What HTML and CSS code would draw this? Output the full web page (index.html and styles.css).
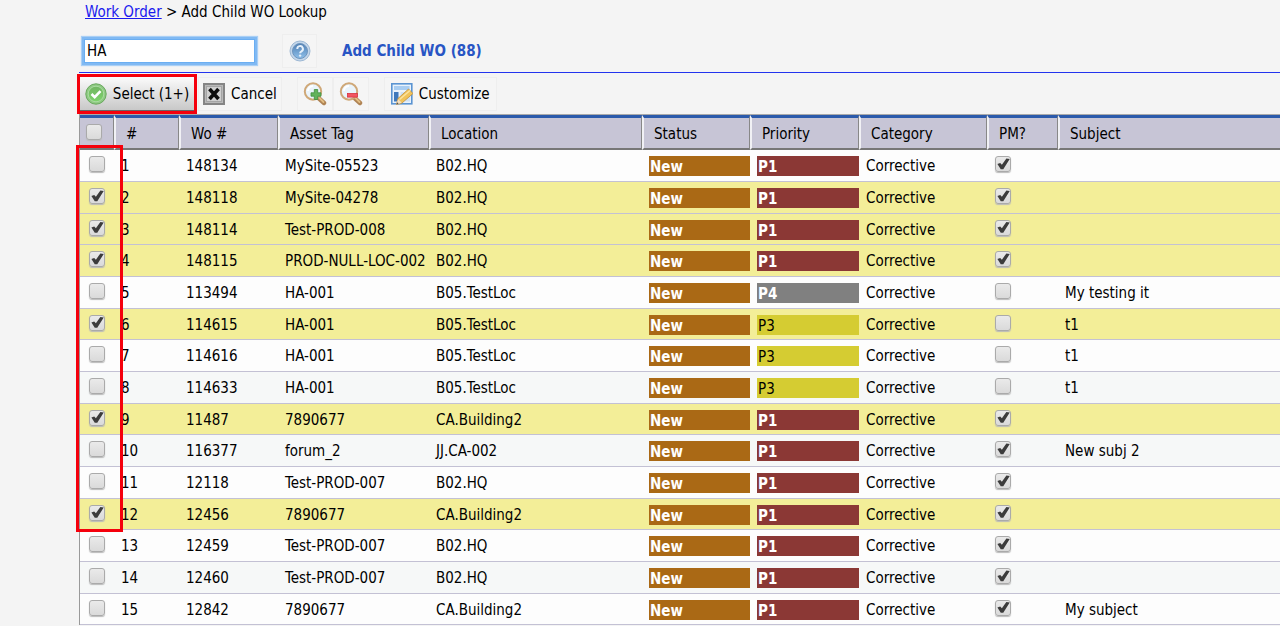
FILE: index.html
```html
<!DOCTYPE html>
<html lang="en">
<head>
    <meta charset="UTF-8">
    <meta name="viewport" content="width=device-width, initial-scale=1.0">
    <title>Add Child WO Lookup</title>
    <link rel="stylesheet" href="styles.css">
</head>
<body>
    <nav class="breadcrumb"><a href="#">Work Order</a> &gt; Add Child WO Lookup</nav>

    <div class="search-bar">
        <input type="text" class="search-input" value="HA" aria-label="Search">
        <button class="tool-btn help-btn" title="Help">
            <svg width="22" height="22" viewBox="0 0 22 22">
                <defs>
                    <linearGradient id="helpFill" x1="0" y1="0" x2="0" y2="1">
                        <stop offset="0" stop-color="#4f7fb3"></stop>
                        <stop offset="1" stop-color="#8fc0ea"></stop>
                    </linearGradient>
                </defs>
                <circle cx="11" cy="11" r="10" fill="#c3d6ea" stroke="#9db8d4"></circle>
                <circle cx="11" cy="11" r="7.5" fill="url(#helpFill)" stroke="#6f95be"></circle>
                <path d="M8.3 9a2.8 2.8 0 1 1 4.2 2.3c-1 .6-1.4 1-1.4 2" fill="none" stroke="#e6f0fa" stroke-width="2"></path>
                <circle cx="11.1" cy="15.6" r="1.2" fill="#e6f0fa"></circle>
            </svg>
        </button>
        <h1 class="title">Add Child WO (88)</h1>
    </div>

    <div class="toolbar">
        <button class="tool-btn select-btn">
            <svg width="22" height="22" viewBox="0 0 22 22">
                <defs>
                    <linearGradient id="okFill" x1="0" y1="0" x2="0" y2="1">
                        <stop offset="0" stop-color="#72b562"></stop>
                        <stop offset="1" stop-color="#7ed36c"></stop>
                    </linearGradient>
                </defs>
                <circle cx="11" cy="11" r="10.2" fill="#8fc983" stroke="#68a85c"></circle>
                <circle cx="11" cy="11" r="7.8" fill="url(#okFill)" stroke="#a9dca0"></circle>
                <path d="M6.5 11l3.2 3.2 5.8-6" fill="none" stroke="#fff" stroke-width="2.6"></path>
            </svg>
            Select (1+)
        </button>
        <button class="tool-btn cancel-btn">
            <svg width="22" height="22" viewBox="0 0 22 22">
                <rect x="1" y="1" width="20" height="20" fill="#b9b9b9" stroke="#858585" stroke-width="2"></rect>
                <rect x="3.5" y="3.5" width="15" height="15" fill="#cfcfcf" stroke="#a5a5a5"></rect>
                <path d="M6.5 6l9 10M15.5 6l-9 10" stroke="#0d0d0d" stroke-width="3.6"></path>
            </svg>
            Cancel
        </button>
        <div class="zoom-group">
            <button class="tool-btn" title="Zoom in">
                <svg width="24" height="24" viewBox="0 0 24 24">
                    <path d="M15.5 16l5.5 5" stroke="#b08455" stroke-width="4.4" stroke-linecap="round"></path>
                    <path d="M16.5 16l4 4" stroke="#e3bf85" stroke-width="1.8" stroke-linecap="round"></path>
                    <circle cx="10" cy="9.5" r="8.2" fill="#eaf4fb" stroke="#cfa878" stroke-width="2"></circle>
                    <path d="M5 9a5 5 0 0 1 5-5" fill="none" stroke="#fff" stroke-width="2"></path>
                    <path d="M11.3 7.5h3.4v3.3H18v3.4h-3.3v3.3h-3.4v-3.3H8v-3.4h3.3z" fill="#62b35b" stroke="#3f8e3d" stroke-width=".8"></path>
                </svg>
            </button>
            <button class="tool-btn" title="Zoom out">
                <svg width="24" height="24" viewBox="0 0 24 24">
                    <path d="M15.5 16l5.5 5" stroke="#b08455" stroke-width="4.4" stroke-linecap="round"></path>
                    <path d="M16.5 16l4 4" stroke="#e3bf85" stroke-width="1.8" stroke-linecap="round"></path>
                    <circle cx="10" cy="9.5" r="8.2" fill="#eaf4fb" stroke="#cfa878" stroke-width="2"></circle>
                    <path d="M5 9a5 5 0 0 1 5-5" fill="none" stroke="#fff" stroke-width="2"></path>
                    <rect x="8.5" y="11.5" width="10" height="3.6" fill="#f25560" stroke="#d8323e" stroke-width=".8"></rect>
                </svg>
            </button>
        </div>
        <button class="tool-btn customize-btn">
            <svg width="22" height="22" viewBox="0 0 22 22">
                <rect x=".8" y=".8" width="20" height="20" fill="#e9f2fb" stroke="#5b94d2" stroke-width="1.6"></rect>
                <rect x="3" y="3" width="15.6" height="4" fill="#a9cdf1"></rect>
                <rect x="3" y="9" width="4.5" height="9.5" fill="#3f78bb"></rect>
                <path d="M9.5 9H19v9.5H9.5z" fill="#cfe1f4"></path>
                <path d="M5.5 21.5l1.5-6L17.500 6l4.500 4.500-11 9.500z" fill="#f1c35a" stroke="#c4903c" stroke-width=".8"></path>
                <path d="M8.5 16.5L19 7.500" stroke="#fbe3a0" stroke-width="1.6"></path>
                <path d="M5.5 21.5L7 16l3.8 3.8z" fill="#f3dfc2"></path>
                <path d="M5.5 21.5l.6-2.2 1.5 1.5z" fill="#555"></path>
            </svg>
            Customize
        </button>
    </div>

    <div class="grid-wrap">
        <table class="grid">
            <colgroup>
                <col class="col-check">
                <col class="col-num">
                <col class="col-wo">
                <col class="col-asset">
                <col class="col-location">
                <col class="col-status">
                <col class="col-priority">
                <col class="col-category">
                <col class="col-pm">
                <col>
            </colgroup>
            <thead>
                <tr>
                    <th class="check"><input type="checkbox" aria-label="Select all"></th>
                    <th>#</th>
                    <th>Wo #</th>
                    <th>Asset Tag</th>
                    <th>Location</th>
                    <th>Status</th>
                    <th>Priority</th>
                    <th>Category</th>
                    <th>PM?</th>
                    <th>Subject</th>
                </tr>
            </thead>
            <tbody>
                <tr>
                    <td class="check"><input type="checkbox" aria-label="Select 148134"></td>
                    <td>1</td><td>148134</td><td>MySite-05523</td><td>B02.HQ</td>
                    <td><span class="tag new">New</span></td><td><span class="tag p1">P1</span></td><td>Corrective</td>
                    <td><input type="checkbox" aria-label="PM" checked></td><td></td>
                </tr>
                <tr class="selected">
                    <td class="check"><input type="checkbox" aria-label="Select 148118" checked></td>
                    <td>2</td><td>148118</td><td>MySite-04278</td><td>B02.HQ</td>
                    <td><span class="tag new">New</span></td><td><span class="tag p1">P1</span></td><td>Corrective</td>
                    <td><input type="checkbox" aria-label="PM" checked></td><td></td>
                </tr>
                <tr class="selected">
                    <td class="check"><input type="checkbox" aria-label="Select 148114" checked></td>
                    <td>3</td><td>148114</td><td>Test-PROD-008</td><td>B02.HQ</td>
                    <td><span class="tag new">New</span></td><td><span class="tag p1">P1</span></td><td>Corrective</td>
                    <td><input type="checkbox" aria-label="PM" checked></td><td></td>
                </tr>
                <tr class="selected">
                    <td class="check"><input type="checkbox" aria-label="Select 148115" checked></td>
                    <td>4</td><td>148115</td><td>PROD-NULL-LOC-002</td><td>B02.HQ</td>
                    <td><span class="tag new">New</span></td><td><span class="tag p1">P1</span></td><td>Corrective</td>
                    <td><input type="checkbox" aria-label="PM" checked></td><td></td>
                </tr>
                <tr>
                    <td class="check"><input type="checkbox" aria-label="Select 113494"></td>
                    <td>5</td><td>113494</td><td>HA-001</td><td>B05.TestLoc</td>
                    <td><span class="tag new">New</span></td><td><span class="tag p4">P4</span></td><td>Corrective</td>
                    <td><input type="checkbox" aria-label="PM"></td><td>My testing it</td>
                </tr>
                <tr class="selected">
                    <td class="check"><input type="checkbox" aria-label="Select 114615" checked></td>
                    <td>6</td><td>114615</td><td>HA-001</td><td>B05.TestLoc</td>
                    <td><span class="tag new">New</span></td><td><span class="tag p3">P3</span></td><td>Corrective</td>
                    <td><input type="checkbox" aria-label="PM"></td><td>t1</td>
                </tr>
                <tr>
                    <td class="check"><input type="checkbox" aria-label="Select 114616"></td>
                    <td>7</td><td>114616</td><td>HA-001</td><td>B05.TestLoc</td>
                    <td><span class="tag new">New</span></td><td><span class="tag p3">P3</span></td><td>Corrective</td>
                    <td><input type="checkbox" aria-label="PM"></td><td>t1</td>
                </tr>
                <tr>
                    <td class="check"><input type="checkbox" aria-label="Select 114633"></td>
                    <td>8</td><td>114633</td><td>HA-001</td><td>B05.TestLoc</td>
                    <td><span class="tag new">New</span></td><td><span class="tag p3">P3</span></td><td>Corrective</td>
                    <td><input type="checkbox" aria-label="PM"></td><td>t1</td>
                </tr>
                <tr class="selected">
                    <td class="check"><input type="checkbox" aria-label="Select 11487" checked></td>
                    <td>9</td><td>11487</td><td>7890677</td><td>CA.Building2</td>
                    <td><span class="tag new">New</span></td><td><span class="tag p1">P1</span></td><td>Corrective</td>
                    <td><input type="checkbox" aria-label="PM" checked></td><td></td>
                </tr>
                <tr>
                    <td class="check"><input type="checkbox" aria-label="Select 116377"></td>
                    <td>10</td><td>116377</td><td>forum_2</td><td>JJ.CA-002</td>
                    <td><span class="tag new">New</span></td><td><span class="tag p1">P1</span></td><td>Corrective</td>
                    <td><input type="checkbox" aria-label="PM" checked></td><td>New subj 2</td>
                </tr>
                <tr>
                    <td class="check"><input type="checkbox" aria-label="Select 12118"></td>
                    <td>11</td><td>12118</td><td>Test-PROD-007</td><td>B02.HQ</td>
                    <td><span class="tag new">New</span></td><td><span class="tag p1">P1</span></td><td>Corrective</td>
                    <td><input type="checkbox" aria-label="PM" checked></td><td></td>
                </tr>
                <tr class="selected">
                    <td class="check"><input type="checkbox" aria-label="Select 12456" checked></td>
                    <td>12</td><td>12456</td><td>7890677</td><td>CA.Building2</td>
                    <td><span class="tag new">New</span></td><td><span class="tag p1">P1</span></td><td>Corrective</td>
                    <td><input type="checkbox" aria-label="PM" checked></td><td></td>
                </tr>
                <tr>
                    <td class="check"><input type="checkbox" aria-label="Select 12459"></td>
                    <td>13</td><td>12459</td><td>Test-PROD-007</td><td>B02.HQ</td>
                    <td><span class="tag new">New</span></td><td><span class="tag p1">P1</span></td><td>Corrective</td>
                    <td><input type="checkbox" aria-label="PM" checked></td><td></td>
                </tr>
                <tr>
                    <td class="check"><input type="checkbox" aria-label="Select 12460"></td>
                    <td>14</td><td>12460</td><td>Test-PROD-007</td><td>B02.HQ</td>
                    <td><span class="tag new">New</span></td><td><span class="tag p1">P1</span></td><td>Corrective</td>
                    <td><input type="checkbox" aria-label="PM" checked></td><td></td>
                </tr>
                <tr>
                    <td class="check"><input type="checkbox" aria-label="Select 12842"></td>
                    <td>15</td><td>12842</td><td>7890677</td><td>CA.Building2</td>
                    <td><span class="tag new">New</span></td><td><span class="tag p1">P1</span></td><td>Corrective</td>
                    <td><input type="checkbox" aria-label="PM" checked></td><td>My subject</td>
                </tr>
            </tbody>
        </table>
        <div class="highlight"></div>
    </div>
</body>
</html>
```
FILE: styles.css
```css
* {
    box-sizing: border-box;
}

body {
    margin: 0;
    padding-left: 79px;
    background: #f4f4f4;
    color: #000;
    font-family: Tahoma, 'DejaVu Sans Condensed', 'DejaVu Sans', sans-serif;
    font-stretch: condensed;
    font-size: 15px;
    line-height: 20px;
}

button,
input {
    font: inherit;
    color: inherit;
}

.breadcrumb {
    padding: 2px 6px;
}

.breadcrumb a {
    color: #1a1aee;
}

/* Search row */
.search-bar {
    display: flex;
    align-items: center;
    height: 48px;
    padding: 5px 5px 0;
}

.search-input {
    width: 171px;
    height: 24px;
    padding: 0 2px;
    border: 1px solid #6aaef2;
    background: #fff;
    outline: none;
    box-shadow: 0 0 0 2px #80b9f3, 0 0 1px 3px #a9cff5;
}

.title {
    margin: 0 0 0 25px;
    font-size: 15px;
    font-weight: bold;
    color: #2855c4;
}

/* Buttons */
.tool-btn {
    display: flex;
    align-items: center;
    justify-content: center;
    gap: 6px;
    height: 34px;
    padding: 0 4px;
    border: 1px solid #eee;
    background: #f5f5f5;
    white-space: nowrap;
    cursor: pointer;
}

.help-btn {
    width: 35px;
    margin-left: 27px;
}

.toolbar {
    display: flex;
    align-items: center;
    height: 42px;
    border-top: 1px solid #2233ee;
}

/* Red frame marks the button to press */
.select-btn {
    width: 116px;
    height: 36px;
    padding: 2px 4px 0;
    border: none;
    border-bottom: 2px solid #666;
    background: linear-gradient(#fdfdfd, #c8c8c8);
    outline: 3px solid #f5000c;
    outline-offset: -1px;
}

.cancel-btn {
    margin-left: 3px;
}

.zoom-group {
    display: flex;
    margin: 0 15px;
}

.zoom-group .tool-btn {
    width: 36px;
}

.customize-btn {
    padding: 0 6px;
}

/* Work order grid */
.grid-wrap {
    position: relative;
    border-top: 1px solid #aaa;
    border-left: 1px solid #999;
}

.grid {
    width: 100%;
    table-layout: fixed;
    border-collapse: separate;
    border-spacing: 0;
}

.col-check { width: 34px; }
.col-num { width: 65px; }
.col-wo { width: 99px; }
.col-asset { width: 151px; }
.col-location { width: 213px; }
.col-status { width: 108px; }
.col-priority { width: 109px; }
.col-category { width: 128px; }
.col-pm { width: 71px; }

th {
    height: 35px;
    padding: 1px 0 0 10px;
    border-top: 3px solid #2b5aab;
    border-bottom: 2px solid #777;
    border-left: 2px solid #f1f1f5;
    border-right: 1px solid #888;
    background: #c7c5d6;
    font-weight: normal;
    text-align: left;
}

th:last-child {
    border-right: none;
}

th.check {
    padding-left: 6px;
    border-left: none;
}

td {
    height: 32px;
    padding: 1px 0 0 7px;
    border-bottom: 1px solid #c3c1d4;
    white-space: nowrap;
}

td.check {
    padding-left: 9px;
}

tbody tr {
    background: #fdfdfd;
}

tbody tr:nth-child(even) {
    background: #f6f8f8;
}

tbody tr.selected {
    background: #f3ee98;
}

tbody tr:nth-child(3n) td {
    height: 31px;
}

.tag {
    display: block;
    height: 20px;
    padding-left: 1px;
    line-height: 22px;
    font-weight: bold;
    color: #fff;
}

.new { background: #aa6915; }
.p1 { background: #8b3835; }
.p4 { background: #808080; }

.p3 {
    background: #d5cc32;
    font-weight: normal;
    color: #000;
}

/* Checkboxes */
input[type="checkbox"] {
    appearance: none;
    display: block;
    width: 16px;
    height: 16px;
    margin: 0 0 4px 1px;
    border: 1px solid #aaa;
    border-radius: 3px;
    background: linear-gradient(#eaeaea, #dadada);
    box-shadow: 0 1px 1px #bbb;
}

td.check input[type="checkbox"],
th input[type="checkbox"] {
    margin-left: 0;
}

input[type="checkbox"]:checked::before {
    content: '';
    display: block;
    width: 14px;
    height: 14px;
    background: #3c3c3c;
    clip-path: polygon(10% 50%, 30% 42%, 42% 56%, 74% 10%, 98% 14%, 52% 88%, 34% 88%);
}

/* Red frame over the row checkboxes */
.highlight {
    position: absolute;
    top: 30px;
    left: -4px;
    width: 47px;
    height: 387px;
    border: 3px solid #f5000c;
    pointer-events: none;
}
```
